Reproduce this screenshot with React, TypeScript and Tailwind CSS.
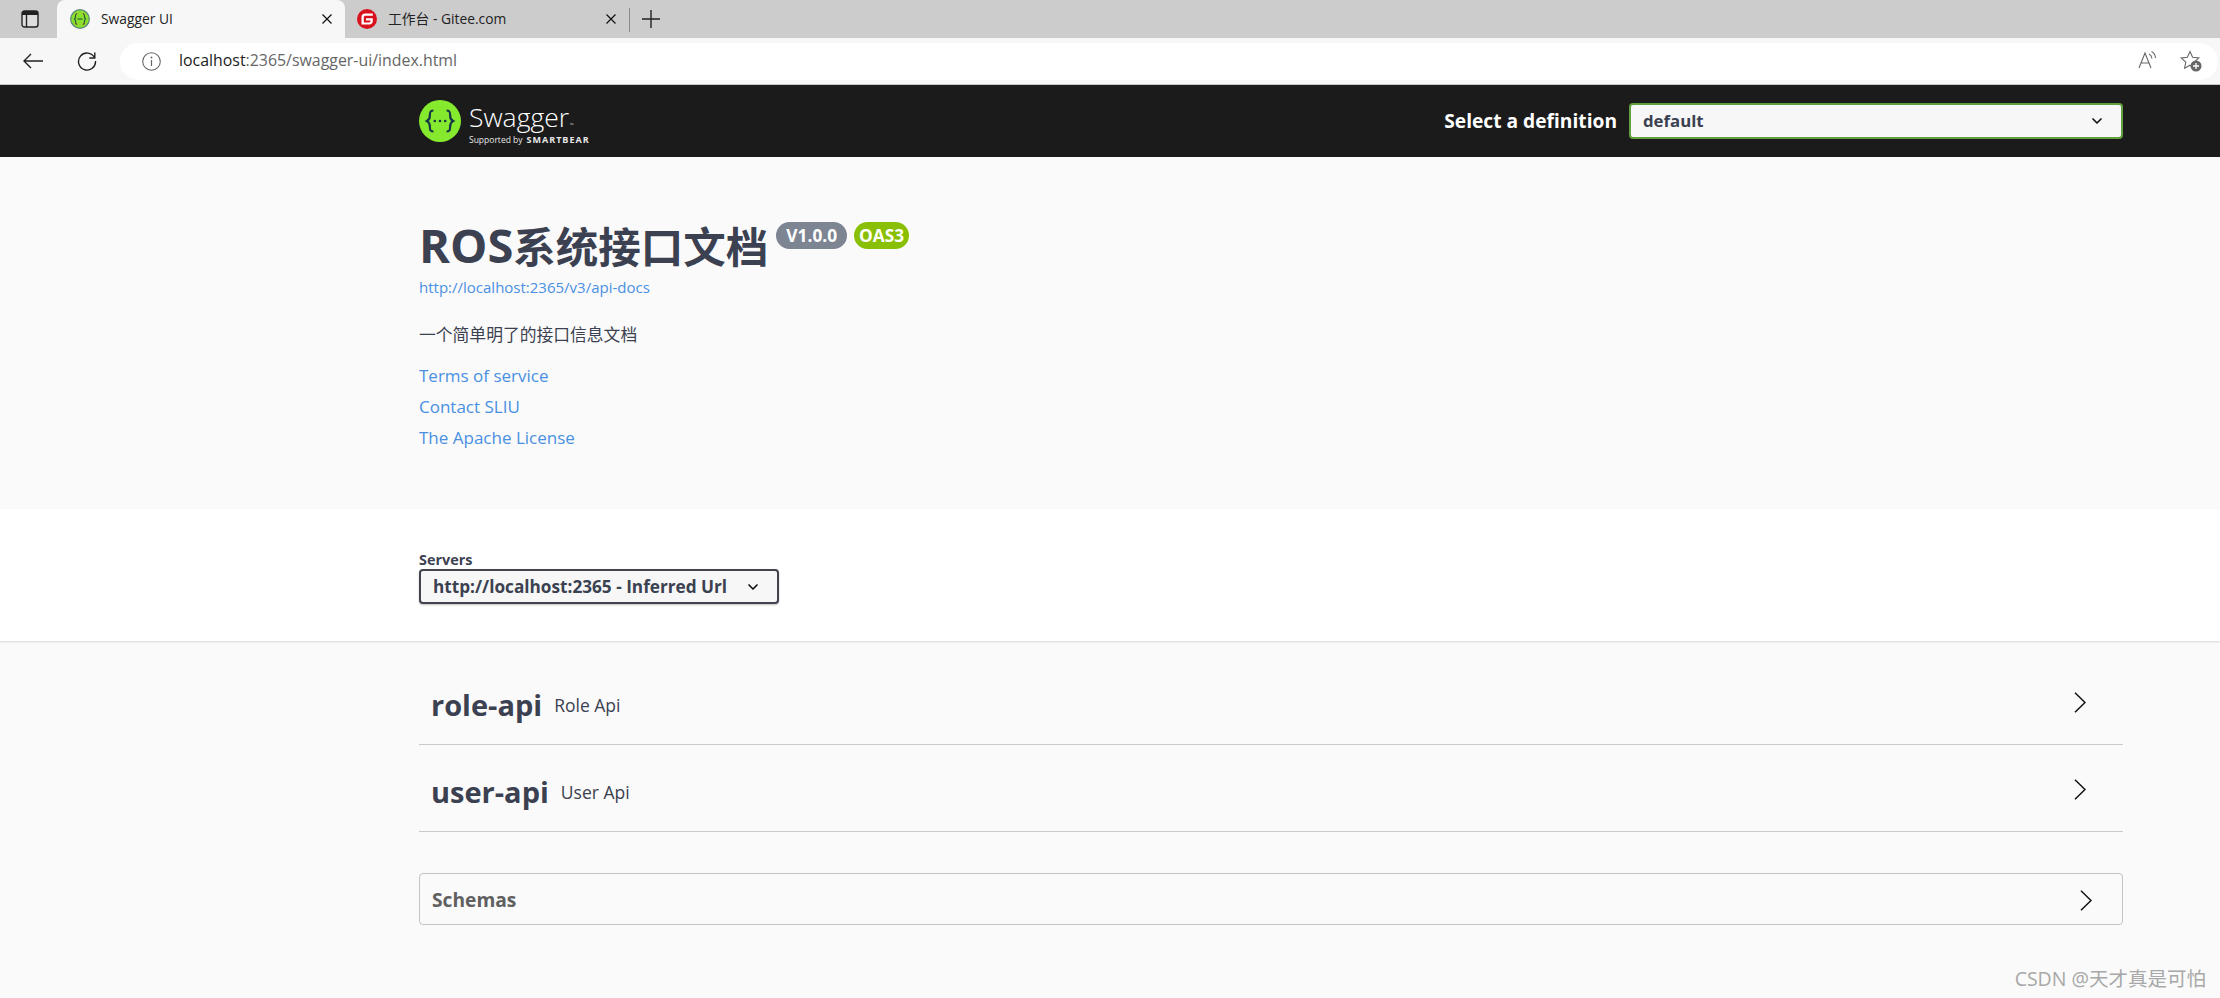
import { ChevronDown } from "lucide-react";

const sans = "font-['Open_Sans','Noto_Sans_CJK_SC',sans-serif]";

function SwaggerLogo() {
  return (
    <svg viewBox="0 0 42 42" className="w-[42px] h-[42px] shrink-0">
      <circle cx="21" cy="21" r="21" fill="#85ea2d" />
      <path d="M14.5 10.5c-3.5 0-3.6 2-3.6 4.2 0 2.8.2 4.6-3 6.3 3.2 1.700 3 3.500 3 6.300 0 2.200.1 4.200 3.600 4.200" fill="none" stroke="#173647" strokeWidth="2.200" />
      <path d="M27.500 10.500c3.500 0 3.600 2 3.600 4.200 0 2.800-.2 4.600 3 6.300-3.200 1.700-3 3.500-3 6.300 0 2.200-.1 4.200-3.600 4.200" fill="none" stroke="#173647" strokeWidth="2.200" />
      <circle cx="15.800" cy="21" r="1.300" fill="#173647" />
      <circle cx="21" cy="21" r="1.300" fill="#173647" />
      <circle cx="26.200" cy="21" r="1.300" fill="#173647" />
    </svg>
  );
}

function SwaggerFavicon() {
  return (
    <svg viewBox="0 0 20 20" className="w-5 h-5 shrink-0">
      <circle cx="10" cy="10" r="9.300" fill="#8ae02c" stroke="#5f8a78" strokeWidth="1.300" />
      <path d="M7 4.500c-2 .5-1.500 2.500-1.500 3.500 0 1-.5 1.500-1 2 .5.5 1 1 1 2 0 1-.5 3 1.500 3.500" fill="none" stroke="#2a5a3a" strokeWidth="1.200" />
      <path d="M13 4.500c2 .5 1.500 2.500 1.500 3.500 0 1 .5 1.500 1 2-.5.5-1 1-1 2 0 1 .5 3-1.500 3.500" fill="none" stroke="#2a5a3a" strokeWidth="1.200" />
      <path d="M7 4.500l-1.300 1.500M13 4.500l1.300 1.500M7 15.500l-1.300-1.500M13 15.500l1.300-1.500" stroke="#b5473a" strokeWidth="1" />
      <path d="M7.500 10h5" stroke="#2a5a3a" strokeWidth="1.200" />
    </svg>
  );
}

function GiteeFavicon() {
  return (
    <svg viewBox="0 0 20 20" className="w-5 h-5 shrink-0">
      <circle cx="10" cy="10" r="10" fill="#d8131e" />
      <path d="M15.800 4.500H8.200A3.700 3.700 0 0 0 4.500 8.200v7.300h7.600a3.700 3.700 0 0 0 3.700-3.700V9.300H9v2.100h4.500v.5a1.500 1.500 0 0 1-1.500 1.500H6.800V8.300c0-.9.700-1.600 1.600-1.600h7.400z" fill="#fff" />
    </svg>
  );
}

function Tab({ active, icon, title, width }: { active?: boolean; icon: React.ReactNode; title: string; width: string }) {
  return (
    <div className={`flex items-center h-[38px] rounded-t-lg pl-[13px] pr-[13px] gap-[11px] ${width} ${active ? "bg-[#f7f7f7]" : ""}`}>
      {icon}
      <span className={`flex-1 text-[13.800px] text-[#222] ${sans}`}>{title}</span>
      <svg viewBox="0 0 10 10" className="w-2.5 h-2.5 shrink-0">
        <path d="M.5.5l9 9M9.500.5l-9 9" stroke="#111" strokeWidth="1.200" />
      </svg>
    </div>
  );
}

function TagRow({ name, desc }: { name: string; desc: string }) {
  return (
    <div className="flex items-center h-[87px] border-b border-[#c9c9ca] pt-2 pl-3 pr-[37px]">
      <span className={`text-[29px] font-bold text-[#3b4151] ${sans}`}>{name}</span>
      <span className={`ml-3 flex-1 text-[17.500px] text-[#3b4151] ${sans}`}>{desc}</span>
      <span className="-mt-[6px]">
        <RightArrow />
      </span>
    </div>
  );
}

function RightArrow() {
  return (
    <svg viewBox="0 0 12 21" className="block w-3 h-[21px] shrink-0">
      <path d="M1 .7l10 9.800-10 9.800" fill="none" stroke="#111" strokeWidth="1.500" />
    </svg>
  );
}

export default function App() {
  return (
    <div className={`relative h-[998px] overflow-hidden bg-[#fafafa] ${sans}`}>
      {/* browser chrome */}
      <div className="flex items-start h-[38px] bg-[#cccccc]">
        <div className="flex items-center justify-center w-[57px] h-[38px] pl-0.5">
          <svg viewBox="0 0 18 18" className="w-[18px] h-[18px]">
            <rect x="1" y="1" width="16" height="16" rx="2.500" fill="#dedede" stroke="#222" strokeWidth="1.400" />
            <path d="M1 2.500a1.500 1.500 0 0 1 1.500-1.500h13a1.500 1.500 0 0 1 1.500 1.500V5H1z" fill="#222" />
            <path d="M5.500 5v12" stroke="#222" strokeWidth="1.400" />
          </svg>
        </div>
        <Tab active icon={<SwaggerFavicon />} title="Swagger UI" width="w-[288px]" />
        <Tab icon={<GiteeFavicon />} title="工作台 - Gitee.com" width="w-[285px] -ml-[1px]" />
        <div className="w-px h-6 mt-2 bg-[#8a8a8a]" />
        <svg viewBox="0 0 18 18" className="w-[18px] h-[18px] mt-[10px] ml-3">
          <path d="M9 0v18M0 9h18" stroke="#222" strokeWidth="1.400" />
        </svg>
      </div>
      <div className="flex items-center h-[47px] bg-[#f7f7f7] border-b border-[#c8c8c8] pl-[23px] pr-0.5">
        <svg viewBox="0 0 20 16" className="w-5 h-4 shrink-0">
          <path d="M20 8H1M8 1L1 8l7 7" fill="none" stroke="#222" strokeWidth="1.400" />
        </svg>
        <svg viewBox="0 0 20 20" className="w-5 h-5 ml-[34px] shrink-0">
          <path d="M17.500 6.500A8.500 8.500 0 1 0 18.500 10" fill="none" stroke="#222" strokeWidth="1.400" />
          <path d="M17.800 1.500v5.500h-5.500" fill="none" stroke="#222" strokeWidth="1.400" />
        </svg>
        <div className="flex items-center flex-1 h-[37px] ml-[23px] rounded-full bg-white pl-[22px] pr-4">
          <svg viewBox="0 0 19 19" className="w-[19px] h-[19px] shrink-0">
            <circle cx="9.500" cy="9.500" r="8.800" fill="none" stroke="#666" strokeWidth="1.100" />
            <path d="M9.500 8v6" stroke="#666" strokeWidth="1.200" />
            <circle cx="9.500" cy="5.500" r="0.900" fill="#666" />
          </svg>
          <div className="flex-1 ml-[18px] text-[15.900px] text-[#666]">
            <span className="text-[#1c1c1c]">localhost</span>:2365/swagger-ui/index.html
          </div>
          <svg viewBox="0 0 22 22" className="w-[22px] h-[22px] shrink-0">
            <path d="M3 18L9 3l6 15M5 13h8" fill="none" stroke="#666" strokeWidth="1.100" />
            <path d="M13 4c1.700.8 2.700 2.300 3 4.500M15.500 1.500c2.500 1.200 3.800 3.500 4 6.500" fill="none" stroke="#666" strokeWidth="1.100" />
          </svg>
          <svg viewBox="0 0 22 22" className="w-[22px] h-[22px] ml-[22px] shrink-0">
            <path d="M10 1.500l2.600 5.700 6.200.700-4.600 4.200 1.200 6.100-5.400-3-5.400 3 1.200-6.100L1.200 7.900l6.200-.700z" fill="none" stroke="#666" strokeWidth="1.100" />
            <circle cx="16" cy="16" r="5.500" fill="#666" />
            <path d="M16 13v6M13 16h6" stroke="#fff" strokeWidth="1.300" />
          </svg>
        </div>
      </div>

      {/* swagger topbar */}
      <div className="flex items-center h-[72px] bg-[#1b1b1b] pl-[419px] pr-[97px]">
        <SwaggerLogo />
        <div className="ml-2 flex-1 pt-[7px] text-white">
          <div className="text-[26.500px] leading-[28px] font-light">
            Swagger<span className="ml-px text-[5px] leading-none">™</span>
          </div>
          <div className="mt-[3px] flex items-center gap-1 text-[8.500px] leading-3 text-[#e8e8e8]">
            Supported by <span className="font-bold text-[9px] tracking-[1px]">SMARTBEAR</span>
          </div>
        </div>
        <span className="pt-px text-[19.200px] font-bold text-white">Select a definition</span>
        <div className="flex items-center justify-between w-[494px] h-[36px] ml-3 pl-3 pr-4 rounded bg-[#f7f7f7] border-2 border-[#62a03f]">
          <span className="text-[16.800px] font-bold text-[#3b4151]">default</span>
          <ChevronDown className="w-4 h-4 text-[#111]" strokeWidth={2.500} />
        </div>
      </div>

      {/* info block */}
      <div className="h-[352px] bg-[#fafafa] pl-[419px] pt-[59px]">
        <div className="flex items-start">
          <h1 className="text-[42.500px] leading-[58px] font-bold text-[#3b4151]">
            <span className="text-[47px]">ROS</span>系统接口文档
          </h1>
          <span className="mt-[6px] ml-[8px] flex items-center h-[27px] px-[10px] rounded-full bg-[#7d8492] text-[17.300px] font-bold text-white">V1.0.0</span>
          <span className="mt-[6px] ml-[7px] flex items-center h-[27px] px-[5px] rounded-full bg-[#89bf04] text-[17.300px] font-bold text-white">OAS3</span>
        </div>
        <div className="mt-[1px] text-[15px] leading-5 text-[#4990e2]">http://localhost:2365/v3/api-docs</div>
        <div className="mt-[26px] text-[16.800px] leading-[24px] text-[#3b4151]">一个简单明了的接口信息文档</div>
        <div className="mt-[17px] flex flex-col gap-[7px] text-[17px] leading-6 text-[#4990e2]">
          <span>Terms of service</span>
          <span>Contact SLIU</span>
          <span>The Apache License</span>
        </div>
      </div>

      {/* servers */}
      <div className="h-[132px] bg-white pl-[419px] pt-[42px] shadow-[0_1px_2px_rgba(0,0,0,0.15)]">
        <div className="text-[14.400px] leading-[18px] font-bold text-[#3b4151]">Servers</div>
        <div className="flex items-center justify-between w-[360px] h-[35px] pl-3 pr-[16px] rounded bg-[#f7f7f7] border-2 border-[#41444e] shadow-[0_1px_2px_rgba(0,0,0,0.25)]">
          <span className="pt-px text-[17.200px] font-bold text-[#3b4151]">http://localhost:2365 - Inferred Url</span>
          <ChevronDown className="w-4 h-4 text-[#111]" strokeWidth={2.500} />
        </div>
      </div>

      {/* tags */}
      <div className="pr-[97px] pl-[419px] pt-[17px]">
        <TagRow name="role-api" desc="Role Api" />
        <TagRow name="user-api" desc="User Api" />
        <div className="flex items-center justify-between h-[52px] mt-[41px] pt-0.5 pl-3 pr-[30px] rounded border border-[#c4c4c4]">
          <span className="text-[19.200px] font-bold text-[#606060]">Schemas</span>
          <RightArrow />
        </div>
      </div>

      {/* watermark */}
      <div className="absolute right-[14px] bottom-[7px] text-[19.500px] leading-6 text-[#a8a8a8]">CSDN @天才真是可怕</div>
    </div>
  );
}
